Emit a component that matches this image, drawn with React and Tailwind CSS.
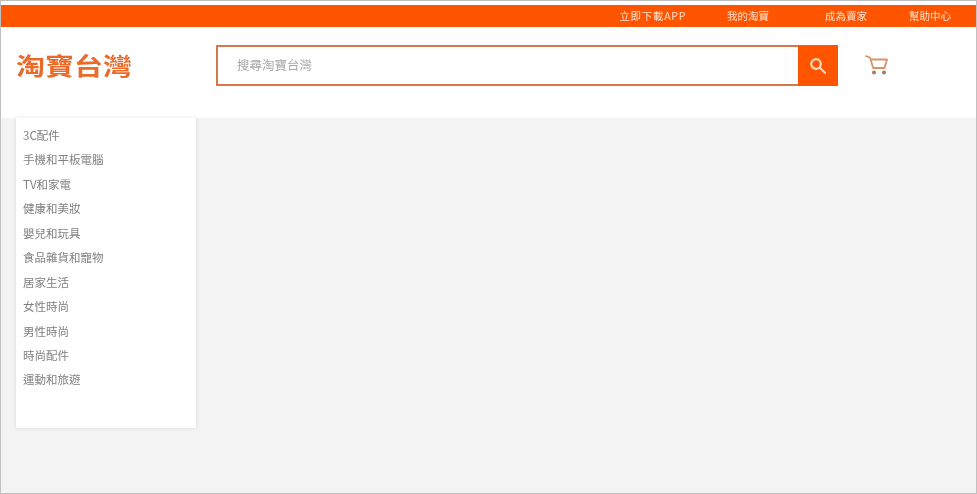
import React from "react";

const categories = [
  "3C配件",
  "手機和平板電腦",
  "TV和家電",
  "健康和美妝",
  "嬰兒和玩具",
  "食品雜貨和寵物",
  "居家生活",
  "女性時尚",
  "男性時尚",
  "時尚配件",
  "運動和旅遊",
];

const SearchIcon = () => (
  <svg width="18" height="18" viewBox="0 0 18 18" fill="none" stroke="#fbd5bd" strokeWidth="2.2" strokeLinecap="round">
    <circle cx="7" cy="7" r="4.8" />
    <path d="M10.8 10.8l5.2 5" />
  </svg>
);

const CartIcon = () => (
  <svg width="24" height="20" viewBox="0 0 24 20" fill="none" stroke="#dc9268" strokeWidth="1.8" strokeLinecap="round" strokeLinejoin="round">
    <path d="M1 1.2l4 1.3 3.2 10.5h11.3l2.5-8.5H6" />
    <circle cx="9" cy="17.4" r="1.1" fill="#a9795f" stroke="#a9795f" />
    <circle cx="19" cy="17.4" r="1.1" fill="#a9795f" stroke="#a9795f" />
  </svg>
);

export default function App() {
  return (
    <div className="h-[494px] w-[977px] overflow-hidden border border-[#c0c0c0] bg-[#f3f3f3] font-['Noto_Sans_CJK_TC','Liberation_Sans',sans-serif]">
      <div className="h-[4px] bg-white" />
      <div className="flex h-[22px] items-center justify-end bg-[#ff5500] pr-[25px] text-[10.5px] text-[#fde3d3] blur-[0.4px]">
        <span className="tracking-[0.7px]">立即下載APP</span>
        <span className="ml-[41px]">我的淘寶</span>
        <span className="ml-[56px]">成為賣家</span>
        <span className="ml-[42px]">幫助中心</span>
      </div>

      <div className="flex h-[91px] items-start bg-white pl-[15px]">
        <div className="mt-[20px] w-[200px] origin-center scale-y-[0.82] text-[29px] leading-[34px] font-bold text-[#ea6a2a] blur-[0.6px]">淘寶台灣</div>
        <div className="mt-[18px] flex h-[41px] w-[622px] border-2 border-[#d4794e] bg-white">
          <input
            type="text"
            placeholder="搜尋淘寶台灣"
            className="min-w-0 flex-1 bg-transparent pl-[19px] text-[12.5px] outline-none blur-[0.4px] placeholder:text-[#a8a8a8]"
          />
          <button className="-my-[2px] -mr-[2px] flex w-[40px] items-center justify-center bg-[#ff5500]">
            <SearchIcon />
          </button>
        </div>
        <div className="mt-[28px] ml-[27px] blur-[0.3px]">
          <CartIcon />
        </div>
      </div>

      <div className="pl-[15px]">
        <div className="h-[310px] w-[180px] bg-white pt-[5px] pl-[7px] shadow-[0_0_4px_rgba(0,0,0,0.1)]">
          {categories.map((name) => (
            <div key={name} className="h-[24.45px] text-[11.5px] leading-[24px] text-[#808080] blur-[0.4px]">
              {name}
            </div>
          ))}
        </div>
      </div>
    </div>
  );
}
